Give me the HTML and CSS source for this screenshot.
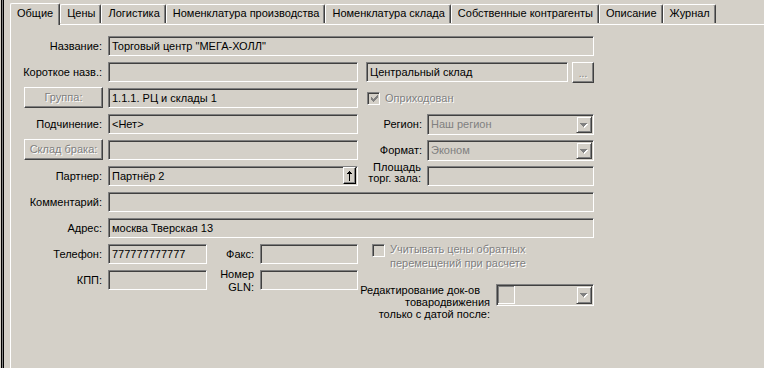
FILE: index.html
```html
<!DOCTYPE html>
<html lang="ru">
<head>
<meta charset="utf-8">
<title>Склад</title>
<link rel="stylesheet" href="styles.css">
</head>
<body>
<div class="window">
  <div class="tabs">
    <div class="tab active">Общие</div>
    <div class="tab">Цены</div>
    <div class="tab">Логистика</div>
    <div class="tab">Номенклатура производства</div>
    <div class="tab">Номенклатура склада</div>
    <div class="tab">Собственные контрагенты</div>
    <div class="tab">Описание</div>
    <div class="tab">Журнал</div>
  </div>
  <div class="panel">
    <div class="form">
      <div class="row">
        <div class="lbl">Название:</div>
        <div class="field f-wide">Торговый центр &quot;МЕГА-ХОЛЛ&quot;</div>
      </div>
      <div class="row">
        <div class="lbl">Короткое назв.:</div>
        <div class="field f-mid"></div>
        <div class="field f-sklad">Центральный склад</div>
        <div class="btn btn-dots disabled">...</div>
      </div>
      <div class="row">
        <div class="lbl lbl-btn"><div class="btn btn-lbl disabled">Группа:</div></div>
        <div class="field f-mid">1.1.1. РЦ и склады 1</div>
        <div class="check check-top">
          <div class="box">
            <svg width="7" height="7" viewBox="0 0 7 7"><path fill="#808080" d="M6 0h1v1h-1z M5 1h2v1h-2z M0 2h1v1h-1z M4 2h3v1h-3z M0 3h2v1h-2z M3 3h3v1h-3z M0 4h5v1h-5z M1 5h3v1h-3z M2 6h1v1h-1z"/></svg>
          </div>
          <div class="check-text disabled">Оприходован</div>
        </div>
      </div>
      <div class="row">
        <div class="lbl">Подчинение:</div>
        <div class="field f-mid">&lt;Нет&gt;</div>
        <div class="rlbl">Регион:</div>
        <div class="combo">
          <div class="combo-text">Наш регион</div>
          <div class="drop"><svg width="8" height="5" viewBox="0 0 8 5"><path fill="#fff" d="M1 1h7v1h-1v1h-1v1h-1v1h-1v-1h-1v-1h-1v-1h-1z"/><path fill="#808080" d="M0 0h7v1h-1v1h-1v1h-1v1h-1v-1h-1v-1h-1v-1h-1z"/></svg></div>
        </div>
      </div>
      <div class="row">
        <div class="lbl lbl-btn"><div class="btn btn-lbl disabled">Склад брака:</div></div>
        <div class="field f-mid"></div>
        <div class="rlbl">Формат:</div>
        <div class="combo">
          <div class="combo-text">Эконом</div>
          <div class="drop"><svg width="8" height="5" viewBox="0 0 8 5"><path fill="#fff" d="M1 1h7v1h-1v1h-1v1h-1v1h-1v-1h-1v-1h-1v-1h-1z"/><path fill="#808080" d="M0 0h7v1h-1v1h-1v1h-1v1h-1v-1h-1v-1h-1v-1h-1z"/></svg></div>
        </div>
      </div>
      <div class="row">
        <div class="lbl">Партнер:</div>
        <div class="field f-mid f-partner">
          <span class="grow">Партнёр 2</span>
          <div class="updown"><svg width="7" height="10" viewBox="0 0 7 10"><path fill="#000" d="M3 0h1v1h1v1h1v1h-2v7h-1v-7h-2v-1h1v-1h1z"/></svg></div>
        </div>
        <div class="rlbl rlbl-two">Площадь<br>торг. зала:</div>
        <div class="field f-area"></div>
      </div>
      <div class="row">
        <div class="lbl">Комментарий:</div>
        <div class="field f-wide"></div>
      </div>
      <div class="row">
        <div class="lbl">Адрес:</div>
        <div class="field f-wide">москва Тверская 13</div>
      </div>
      <div class="bottom">
        <div class="bottom-left">
          <div class="row">
            <div class="lbl">Телефон:</div>
            <div class="field f-short">777777777777</div>
            <div class="mlbl">Факс:</div>
            <div class="field f-fax"></div>
          </div>
          <div class="row">
            <div class="lbl">КПП:</div>
            <div class="field f-short"></div>
            <div class="mlbl mlbl-two">Номер<br>GLN:</div>
            <div class="field f-fax"></div>
          </div>
        </div>
        <div class="bottom-right">
          <div class="check check-multi">
            <div class="box"></div>
            <div class="check-text check-text-two disabled">Учитывать цены обратных<br>перемещений при расчете</div>
          </div>
          <div class="date-row">
            <div class="date-lbl">
              <span class="line line-first">Редактирование док-ов</span>
              <span class="line">товародвижения</span>
              <span class="line">только с датой после:</span>
            </div>
            <div class="combo combo-date">
              <div class="date-box"></div>
              <div class="combo-text"></div>
              <div class="drop"><svg width="8" height="5" viewBox="0 0 8 5"><path fill="#fff" d="M1 1h7v1h-1v1h-1v1h-1v1h-1v-1h-1v-1h-1v-1h-1z"/><path fill="#808080" d="M0 0h7v1h-1v1h-1v1h-1v1h-1v-1h-1v-1h-1v-1h-1z"/></svg></div>
            </div>
          </div>
        </div>
      </div>
    </div>
  </div>
</div>
</body>
</html>
```

FILE: styles.css
```css
* { box-sizing: border-box; }
html, body { margin: 0; padding: 0; }
body {
  background: #d4d0c8;
  font-family: "Liberation Sans", Arial, sans-serif;
  font-size: 11px;
  color: #000;
  width: 764px;
  height: 368px;
  overflow: hidden;
}
.window {
  height: 368px;
  padding-left: 10px;
  box-shadow: inset 1px 0 #d4d0c8, inset 2px 0 #000, inset 3px 0 #808080, inset 4px 0 #000;
}
.tabs {
  display: flex;
  align-items: flex-end;
  height: 24px;
  position: relative;
  z-index: 1;
}
.tab {
  height: 19px;
  margin-bottom: 1px;
  padding: 0 5px 0 6px;
  border-top: 1px solid #fff;
  border-left: 1px solid #fff;
  border-right: 1px solid #404040;
  border-radius: 2px 2px 0 0;
  box-shadow: inset -1px 0 #808080;
  line-height: 17px;
  white-space: nowrap;
  background: #d4d0c8;
}
.tab.active {
  height: 22px;
  margin-bottom: -1px;
  padding: 0 6px;
  line-height: 18px;
}
.panel {
  height: 344px;
  border-top: 1px solid #fff;
  border-left: 1px solid #fff;
}
.form {
  padding-top: 11px;
  display: flex;
  flex-direction: column;
  gap: 6px;
}
.row {
  display: flex;
  align-items: center;
  height: 20px;
}
.lbl {
  flex: none;
  width: 92px;
  margin-right: 5px;
  padding-right: 1px;
  text-align: right;
  white-space: nowrap;
}
.lbl-btn {
  display: flex;
  justify-content: flex-end;
  padding-right: 0;
  align-self: flex-start;
  margin-top: -1px;
}
.field {
  flex: none;
  height: 20px;
  border-top: 1px solid #808080;
  border-left: 1px solid #808080;
  border-right: 1px solid #fff;
  border-bottom: 1px solid #fff;
  box-shadow: inset 1px 1px #404040;
  padding-left: 3px;
  line-height: 18px;
  white-space: nowrap;
  overflow: hidden;
}
.f-wide { width: 486px; }
.f-mid { width: 250px; }
.f-sklad { width: 202px; margin-left: 8px; }
.f-area { width: 167px; }
.f-short { width: 99px; }
.f-fax { width: 98px; }
.f-partner { display: flex; padding-right: 1px; }
.grow { flex: 1; }
.updown {
  width: 13px;
  height: 17px;
  border-top: 1px solid #fff;
  border-left: 1px solid #fff;
  border-right: 1px solid #000;
  border-bottom: 1px solid #000;
  box-shadow: inset -1px -1px #808080;
  display: flex;
  align-items: center;
  justify-content: center;
}
.btn {
  flex: none;
  border-top: 1px solid #fff;
  border-left: 1px solid #fff;
  border-right: 1px solid #404040;
  border-bottom: 1px solid #404040;
  box-shadow: inset -1px -1px #808080;
  text-align: center;
  white-space: nowrap;
}
.btn-lbl {
  width: 79px;
  height: 21px;
  line-height: 19px;
}
.btn-dots {
  width: 22px;
  height: 21px;
  margin-left: 4px;
  align-self: flex-start;
  line-height: 22px;
  font-size: 10px;
}
.disabled {
  color: #808080;
  text-shadow: 1px 1px 0 #fff;
}
.check {
  display: flex;
  align-items: center;
}
.check-top { margin-left: 9px; }
.box {
  flex: none;
  width: 13px;
  height: 13px;
  border-top: 1px solid #808080;
  border-left: 1px solid #808080;
  border-right: 1px solid #fff;
  border-bottom: 1px solid #fff;
  box-shadow: inset 1px 1px #404040;
  display: flex;
  align-items: center;
  justify-content: center;
  padding: 1px 0 0 1px;
}
.check-text {
  margin-left: 5px;
  white-space: nowrap;
}
.rlbl {
  flex: none;
  width: 60px;
  margin-left: 4px;
  margin-right: 5px;
  text-align: right;
  white-space: nowrap;
}
.rlbl-two {
  line-height: 11px;
  margin-top: -6px;
  padding-right: 1px;
}
.combo {
  flex: none;
  display: flex;
  width: 167px;
  height: 21px;
  border-top: 1px solid #808080;
  border-left: 1px solid #808080;
  border-right: 1px solid #fff;
  border-bottom: 1px solid #fff;
  box-shadow: inset 1px 1px #404040;
  padding: 1px;
  align-self: flex-start;
}
.combo-text {
  flex: 1;
  padding-left: 2px;
  line-height: 17px;
  color: #808080;
  white-space: nowrap;
}
.drop {
  flex: none;
  width: 16px;
  border-top: 1px solid #d4d0c8;
  border-left: 1px solid #d4d0c8;
  border-right: 1px solid #404040;
  border-bottom: 1px solid #404040;
  box-shadow: inset 1px 1px #fff, inset -1px -1px #808080;
  display: flex;
  align-items: center;
  justify-content: center;
  padding-top: 1px;
}
.bottom {
  display: flex;
  align-items: flex-start;
}
.bottom-left {
  display: flex;
  flex-direction: column;
  gap: 6px;
}
.mlbl {
  flex: none;
  width: 48px;
  margin-right: 5px;
  padding-right: 1px;
  text-align: right;
  white-space: nowrap;
}
.mlbl-two { line-height: 13px; margin-top: 1px; }
.bottom-right {
  width: 232px;
  margin-left: 4px;
}
.check-multi {
  align-items: flex-start;
  padding-left: 10px;
}
.check-text-two {
  line-height: 14px;
  margin-top: -2px;
}
.date-row {
  margin-top: 14px;
  display: flex;
  justify-content: flex-end;
  align-items: flex-end;
}
.date-lbl {
  margin-right: 6px;
  margin-bottom: 3px;
  text-align: right;
  line-height: 12px;
  white-space: nowrap;
}
.line { display: block; }
.line-first { padding-right: 10px; }
.combo-date {
  width: 98px;
  height: 22px;
  padding-left: 1px;
  padding-top: 1px;
}
.date-box {
  width: 17px;
  border-right: 1px solid #fff;
  border-bottom: 1px solid #fff;
  box-shadow: inset 1px 1px #808080;
}
```
